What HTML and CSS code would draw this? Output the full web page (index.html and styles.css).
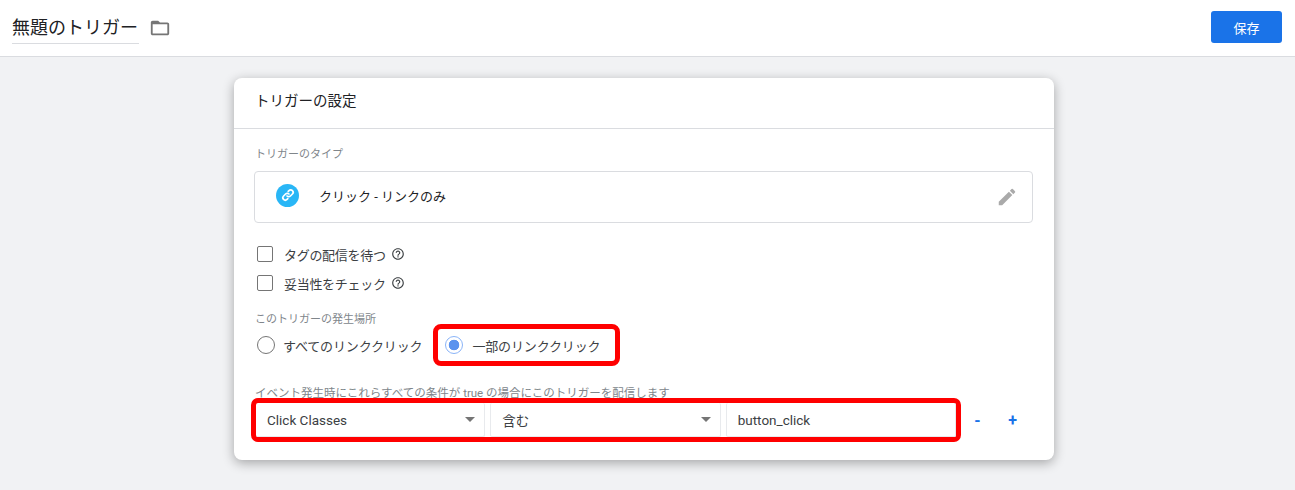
FILE: index.html
```html
<!DOCTYPE html>
<html lang="ja">
<head>
  <meta charset="UTF-8" />
  <title>無題のトリガー</title>
  <link rel="stylesheet" href="styles.css">
</head>
<body>

  <header class="top-bar">
    <div class="title">無題のトリガー</div>
    <svg class="folder-icon" viewBox="0 0 24 24" width="22" height="22">
      <path fill="#757575" d="M20 6h-8l-2-2H4c-1.1 0-2 .9-2 2v12c0 1.1.9 2 2 2h16c1.1 0 2-.9 2-2V8c0-1.1-.9-2-2-2zm0 12H4V8h16v10z"/>
    </svg>
    <button class="save-btn">保存</button>
  </header>

  <main class="card">
    <div class="card-title">トリガーの設定</div>

    <div class="card-body">
      <div class="label type-label">トリガーのタイプ</div>

      <div class="type-box">
        <span class="type-icon">
          <svg viewBox="0 0 24 24" width="16" height="16">
            <path fill="none" stroke="#fff" stroke-width="2.6" stroke-linecap="round" d="M10.5 13.5a3.6 3.6 0 0 0 5.1 0l3-3a3.6 3.6 0 0 0-5.1-5.1l-1.2 1.2M13.5 10.5a3.6 3.6 0 0 0-5.1 0l-3 3a3.6 3.6 0 0 0 5.1 5.1l1.2-1.2"/>
          </svg>
        </span>
        <span class="type-name">クリック - リンクのみ</span>
        <svg class="edit-icon" viewBox="0 0 24 24" width="22" height="22">
          <path fill="#aaaaaa" d="M3 17.25V21h3.75L17.81 9.94l-3.75-3.75L3 17.25zM20.71 7.04a1 1 0 0 0 0-1.41l-2.34-2.34a1 1 0 0 0-1.41 0l-1.83 1.83 3.75 3.75 1.83-1.83z"/>
        </svg>
      </div>

      <div class="check-row first">
        <span class="checkbox"></span>
        <span>タグの配信を待つ</span>
        <svg class="help" viewBox="0 0 24 24" width="14" height="14">
          <path fill="#3c4043" d="M11 18h2v-2h-2v2zm1-16C6.48 2 2 6.48 2 12s4.48 10 10 10 10-4.48 10-10S17.52 2 12 2zm0 18c-4.41 0-8-3.59-8-8s3.59-8 8-8 8 3.59 8 8-3.59 8-8 8zm0-14c-2.21 0-4 1.79-4 4h2c0-1.1.9-2 2-2s2 .9 2 2c0 2-3 1.75-3 5h2c0-2.25 3-2.5 3-5 0-2.21-1.79-4-4-4z"/>
        </svg>
      </div>
      <div class="check-row">
        <span class="checkbox"></span>
        <span>妥当性をチェック</span>
        <svg class="help" viewBox="0 0 24 24" width="14" height="14">
          <path fill="#3c4043" d="M11 18h2v-2h-2v2zm1-16C6.48 2 2 6.48 2 12s4.48 10 10 10 10-4.48 10-10S17.52 2 12 2zm0 18c-4.41 0-8-3.59-8-8s3.59-8 8-8 8 3.59 8 8-3.59 8-8 8zm0-14c-2.21 0-4 1.79-4 4h2c0-1.1.9-2 2-2s2 .9 2 2c0 2-3 1.75-3 5h2c0-2.25 3-2.5 3-5 0-2.21-1.79-4-4-4z"/>
        </svg>
      </div>

      <div class="label fire-label">このトリガーの発生場所</div>
      <div class="radio-row">
        <div class="radio-item">
          <span class="radio"></span>
          <span>すべてのリンククリック</span>
        </div>
        <div class="radio-item marked">
          <span class="radio on"></span>
          <span>一部のリンククリック</span>
        </div>
      </div>

      <div class="label cond-label">イベント発生時にこれらすべての条件が true の場合にこのトリガーを配信します</div>
      <div class="cond-row">
        <div class="cond-fields">
          <div class="field">Click Classes<span class="arrow"></span></div>
          <div class="field">含む<span class="arrow"></span></div>
          <div class="field">button_click</div>
        </div>
        <button class="row-btn minus">-</button>
        <button class="row-btn">+</button>
      </div>
    </div>
  </main>

</body>
</html>
```

FILE: styles.css
```css
:root {
  --accent: #1a73e8;
  --line: #dadce0;
  --mark: #ff0000;
  --text: #3c4043;
  --muted: #80868b;
}

* {
  box-sizing: border-box;
}

html,
body {
  height: 100%;
}

body {
  margin: 0;
  overflow: hidden;
  background-color: #f1f2f4;
  color: var(--text);
  font-family: Roboto, "Noto Sans CJK JP", sans-serif;
  font-size: 13px;
}

.top-bar {
  display: flex;
  align-items: flex-start;
  height: 57px;
  padding: 11px 13px 0 12px;
  background: white;
  border-bottom: 1px solid var(--line);
}

.title {
  width: 127px;
  height: 33px;
  border-bottom: 1px solid var(--line);
  font-size: 18px;
  line-height: 33px;
  white-space: nowrap;
  color: #202124;
}

.folder-icon {
  margin: 6px 0 0 10px;
}

.save-btn {
  width: 71px;
  height: 32px;
  margin-left: auto;
  background-color: var(--accent);
  color: white;
  border: none;
  border-radius: 3px;
  font-family: inherit;
  font-size: 13px;
}

.card {
  width: 820px;
  height: 382px;
  margin: 21px 0 0 234px;
  background: white;
  border-radius: 8px;
  box-shadow: 0 3px 12px rgba(0,0,0,0.32);
}

.card-title {
  height: 51px;
  padding: 14px 21px 0;
  border-bottom: 1px solid var(--line);
  font-size: 14.5px;
  line-height: 20px;
  color: #202124;
}

.card-body {
  padding: 0 21px 0 20px;
}

.label {
  font-size: 11px;
  line-height: 16px;
  color: var(--muted);
  white-space: nowrap;
}

.type-label {
  height: 42px;
  padding: 18px 0 0 1px;
}

.type-box {
  display: flex;
  align-items: center;
  height: 52px;
  padding: 0 14px 4px 21px;
  border: 1px solid var(--line);
  border-radius: 4px;
}

.type-icon {
  display: flex;
  align-items: center;
  justify-content: center;
  width: 23px;
  height: 23px;
  background-color: #29b6f6;
  border-radius: 50%;
}

.type-name {
  margin-left: 20px;
  color: #202124;
}

.edit-icon {
  margin: 4px 0 0 auto;
}

.check-row {
  display: flex;
  align-items: center;
  height: 20px;
  margin: 9px 0 0 3px;
  letter-spacing: -0.3px;
}

.check-row.first {
  margin-top: 21px;
}

.checkbox {
  width: 16px;
  height: 16px;
  margin-right: 11px;
  border: 1px solid #757575;
  border-radius: 2px;
}

.help {
  margin-left: 5px;
}

.fire-label {
  margin-top: 19px;
  padding-left: 1px;
}

.radio-row {
  display: flex;
  align-items: center;
  margin-top: -4px;
  letter-spacing: -0.15px;
}

.radio-item {
  display: flex;
  align-items: center;
  height: 42px;
  padding-left: 3px;
}

.radio-item.marked {
  width: 187px;
  margin-left: 11px;
  padding-left: 7px;
  border: 5px solid var(--mark);
  border-radius: 8px;
}

.radio {
  width: 18px;
  height: 18px;
  margin-right: 8px;
  border: 1.5px solid #757575;
  border-radius: 50%;
}

.radio.on {
  margin-right: 9px;
  border-color: #8ab4f8;
  background: radial-gradient(circle, #5b93ee 0 5px, white 5.6px);
}

.cond-label {
  margin-top: 19px;
  padding-left: 1px;
  font-size: 11.5px;
}

.cond-row {
  display: flex;
  align-items: center;
  margin: -3px 0 0 -3px;
}

.cond-fields {
  display: flex;
  gap: 5px;
  width: 710px;
  height: 44px;
  border: 5px solid var(--mark);
  border-radius: 7px;
}

.field {
  display: flex;
  align-items: center;
  flex: 1;
  padding: 0 11px;
  border-right: 1px solid #e8eaed;
  border-bottom: 1px solid #e8eaed;
  border-radius: 2px;
  font-size: 13.5px;
}

.field + .field {
  border-left: 1px solid #e8eaed;
}

.arrow {
  width: 0;
  height: 0;
  margin-left: auto;
  margin-right: -2px;
  border-left: 5px solid transparent;
  border-right: 5px solid transparent;
  border-top: 5px solid #757575;
}

.row-btn {
  width: 35px;
  padding: 0;
  background: none;
  border: none;
  color: var(--accent);
  font-family: inherit;
  font-size: 16px;
  font-weight: 700;
  text-align: center;
}

.row-btn.minus {
  margin-left: -1px;
}
```
